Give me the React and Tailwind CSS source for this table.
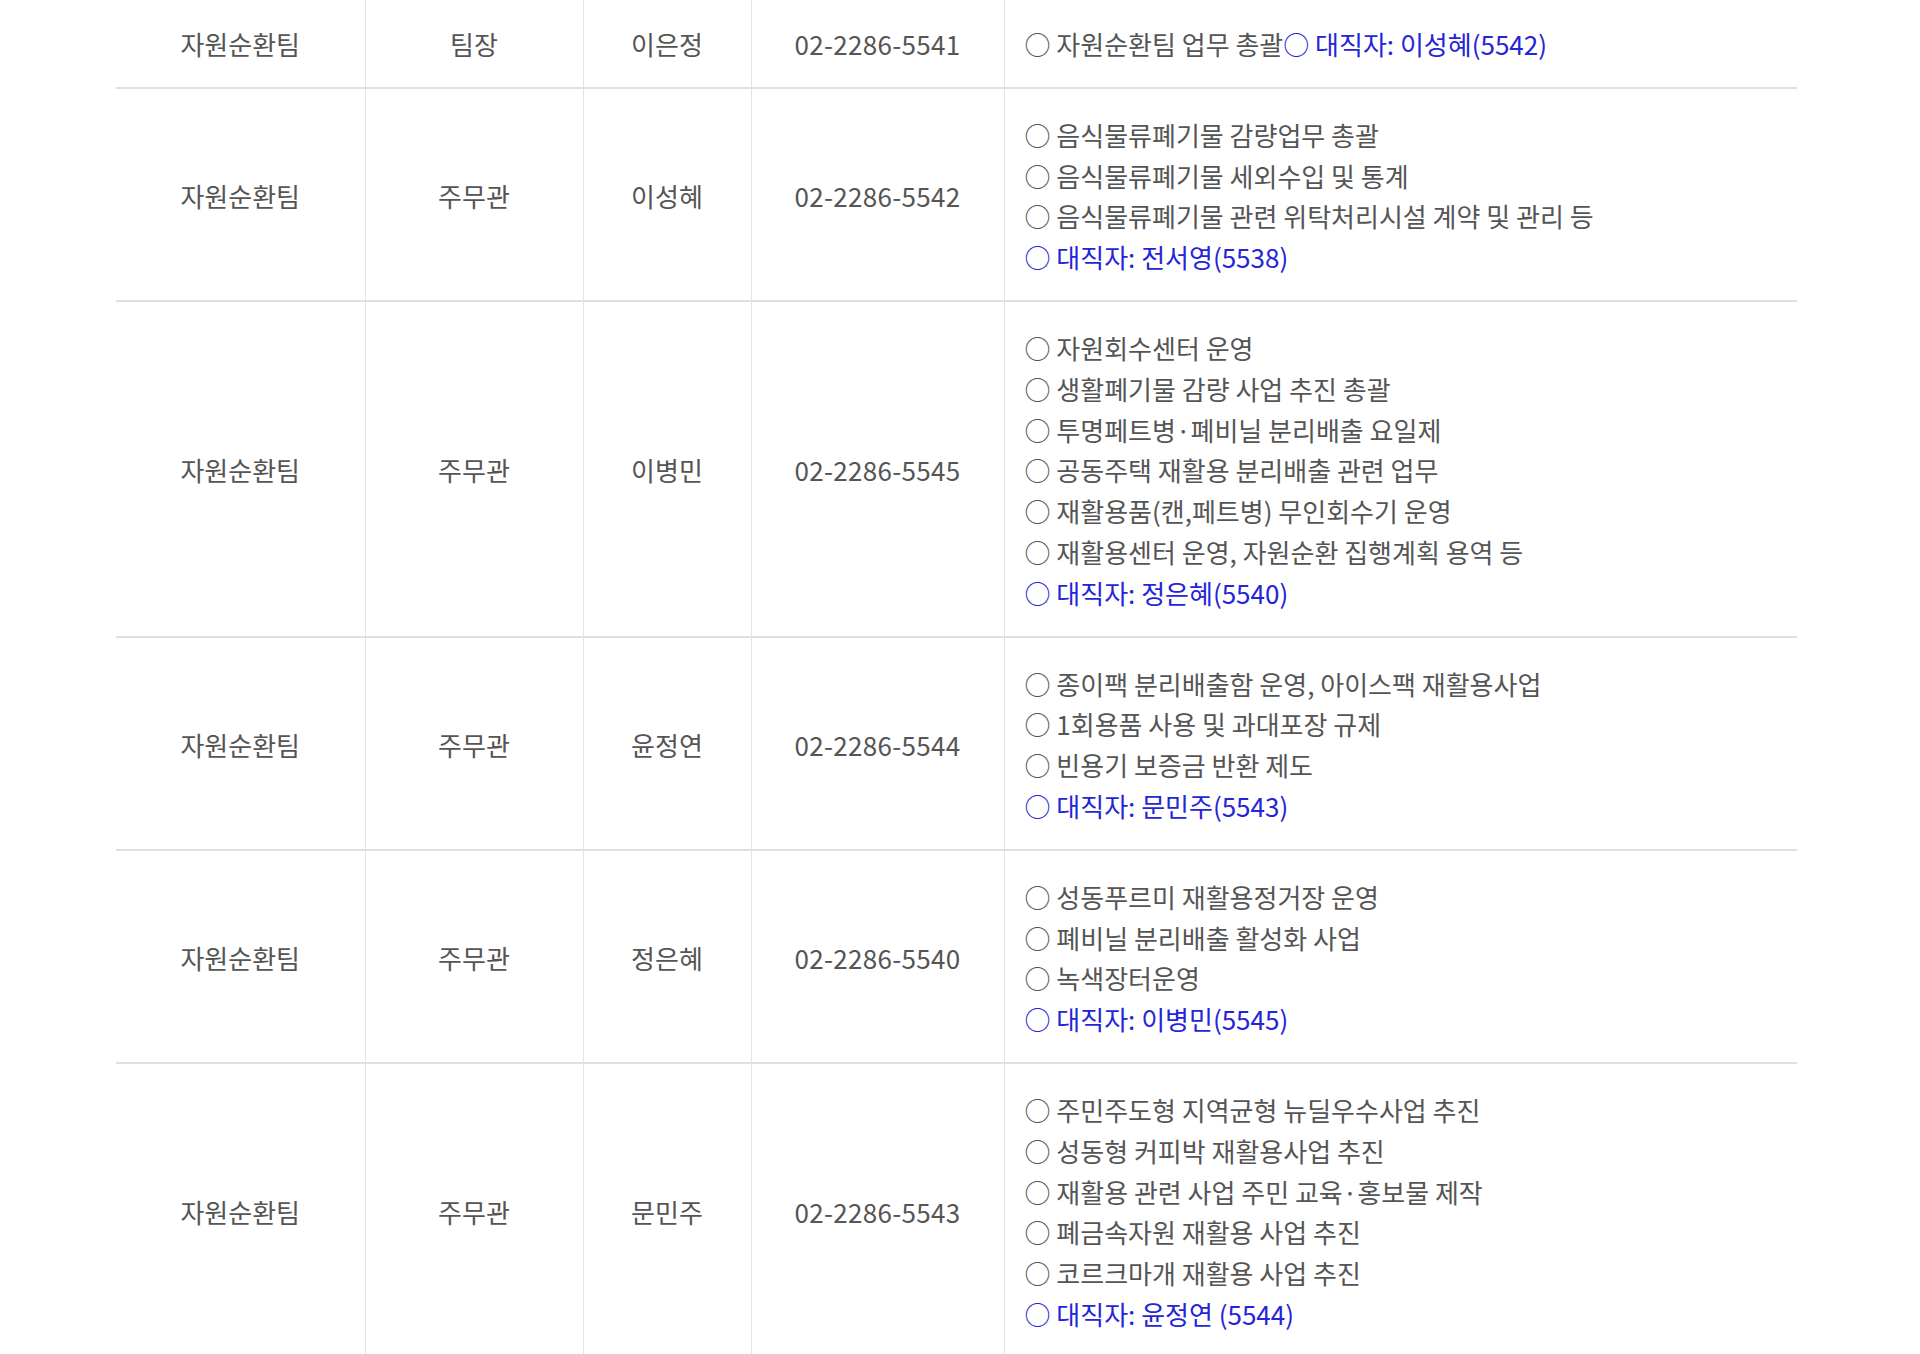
import React from 'react'

const rows = [
  {
    team: '자원순환팀', rank: '팀장', name: '이은정', tel: '02-2286-5541',
    inline: true,
    duties: ['자원순환팀 업무 총괄'],
    sub: '대직자: 이성혜(5542)',
  },
  {
    team: '자원순환팀', rank: '주무관', name: '이성혜', tel: '02-2286-5542',
    duties: [
      '음식물류폐기물 감량업무 총괄',
      '음식물류폐기물 세외수입 및 통계',
      '음식물류폐기물 관련 위탁처리시설 계약 및 관리 등',
    ],
    sub: '대직자: 전서영(5538)',
  },
  {
    team: '자원순환팀', rank: '주무관', name: '이병민', tel: '02-2286-5545',
    duties: [
      '자원회수센터 운영',
      '생활폐기물 감량 사업 추진 총괄',
      '투명페트병·폐비닐 분리배출 요일제',
      '공동주택 재활용 분리배출 관련 업무',
      '재활용품(캔,페트병) 무인회수기 운영',
      '재활용센터 운영, 자원순환 집행계획 용역 등',
    ],
    sub: '대직자: 정은혜(5540)',
  },
  {
    team: '자원순환팀', rank: '주무관', name: '윤정연', tel: '02-2286-5544',
    duties: [
      '종이팩 분리배출함 운영, 아이스팩 재활용사업',
      '1회용품 사용 및 과대포장 규제',
      '빈용기 보증금 반환 제도',
    ],
    sub: '대직자: 문민주(5543)',
  },
  {
    team: '자원순환팀', rank: '주무관', name: '정은혜', tel: '02-2286-5540',
    duties: [
      '성동푸르미 재활용정거장 운영',
      '폐비닐 분리배출 활성화 사업',
      '녹색장터운영',
    ],
    sub: '대직자: 이병민(5545)',
  },
  {
    team: '자원순환팀', rank: '주무관', name: '문민주', tel: '02-2286-5543',
    duties: [
      '주민주도형 지역균형 뉴딜우수사업 추진',
      '성동형 커피박 재활용사업 추진',
      '재활용 관련 사업 주민 교육·홍보물 제작',
      '폐금속자원 재활용 사업 추진',
      '코르크마개 재활용 사업 추진',
    ],
    sub: '대직자: 윤정연 (5544)',
  },
]

function App() {
  return (
    <div className="min-h-screen overflow-hidden bg-white pl-[116px] font-['Noto_Sans_CJK_KR','Noto_Sans',sans-serif] text-[26px] leading-[40.8px] text-[#555555]">
      <table className="-mt-[2px] w-[1681px] table-fixed border-collapse">
        <colgroup>
          <col className="w-[249px]" />
          <col className="w-[218px]" />
          <col className="w-[168px]" />
          <col className="w-[253px]" />
          <col className="w-[793px]" />
        </colgroup>
        <tbody>
          {rows.map((row, i) => (
            <tr key={i} className="border-b-2 border-[#dedfe4]">
              <td className="border-r border-[#e2e3e8] pt-[26px] pb-[22px] text-center align-middle">{row.team}</td>
              <td className="border-r border-[#e2e3e8] pt-[26px] pb-[22px] text-center align-middle">{row.rank}</td>
              <td className="border-r border-[#e2e3e8] pt-[26px] pb-[22px] text-center align-middle">{row.name}</td>
              <td className="border-r border-[#e2e3e8] pt-[26px] pb-[22px] text-center align-middle tracking-[0.3px]">{row.tel}</td>
              <td className="pt-[26px] pb-[22px] pl-5 pr-4 text-left align-middle">
                {row.inline ? (
                  <p>
                    ○ {row.duties[0]}
                    <span className="text-[#2424d8]">○ {row.sub}</span>
                  </p>
                ) : (
                  <>
                    {row.duties.map((d) => (
                      <p key={d}>○ {d}</p>
                    ))}
                    <p className="text-[#2424d8]">○ {row.sub}</p>
                  </>
                )}
              </td>
            </tr>
          ))}
        </tbody>
      </table>
    </div>
  )
}

export default App
